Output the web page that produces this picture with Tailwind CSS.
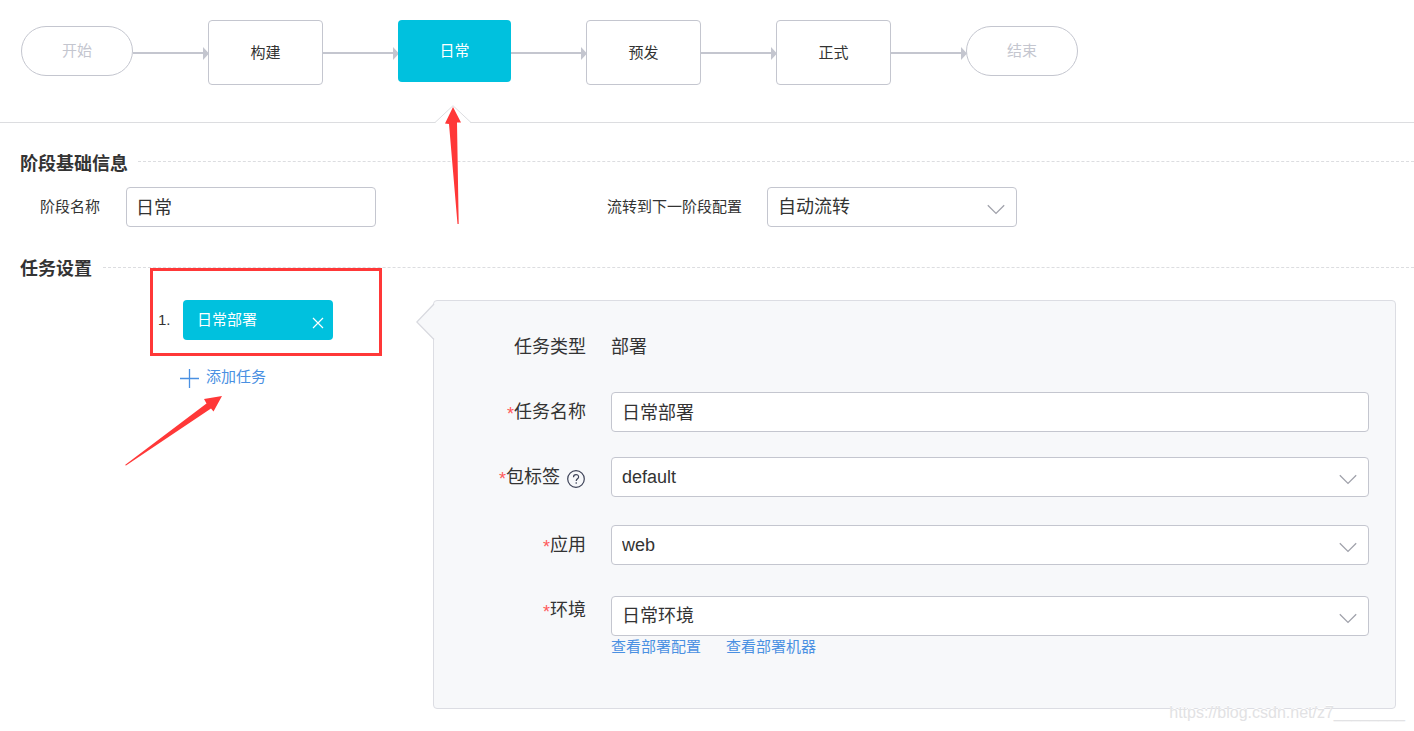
<!DOCTYPE html>
<html lang="zh-CN">
<head>
<meta charset="utf-8">
<meta name="viewport" content="width=device-width, initial-scale=1">
<title>流水线配置</title>
<script src="https://cdn.jsdelivr.net/npm/@tailwindcss/browser@4"></script>
</head>
<body class="relative min-h-screen bg-white font-['Liberation_Sans','Noto_Sans_CJK_SC',sans-serif] text-[15px] text-[#333]">

<!-- Pipeline stages -->
<header class="flex items-start border-b border-[#dcdde0] pt-5 pb-[37px] pl-[21px]">
  <button class="mt-[6px] h-[50px] w-28 shrink-0 rounded-full border border-[#c4c6cf] pt-px text-[#c4c6cf]">开始</button>
  <svg class="relative mt-[27px] h-[13px] w-[76px] -mr-px shrink-0" viewBox="0 0 76 13"><path d="M0 5h71v2H0zM70 0l6 6.5-6 6.5z" fill="#c4c6cf"/></svg>
  <button class="h-[65px] w-[115px] shrink-0 rounded border border-[#c4c6cf] pt-px">构建</button>
  <svg class="relative mt-[27px] h-[13px] w-[76px] -mr-px shrink-0" viewBox="0 0 76 13"><path d="M0 5h71v2H0zM70 0l6 6.5-6 6.5z" fill="#c4c6cf"/></svg>
  <div class="relative shrink-0">
    <button class="block h-[62px] w-[113px] rounded bg-[#00c1de] pt-px text-white">日常</button>
    <svg class="absolute top-[85px] left-[37px] h-[19px] w-9" viewBox="0 0 36 19"><path d="M0 17.5h0.500L18 .7 35.500 17.500V19H0z" fill="#fff"/><path d="M0 17.500L18 .7 36 17.500" fill="none" stroke="#dcdde0"/></svg>
    <svg class="absolute top-[87px] left-[46px] z-10 h-[118px] w-[18px]" viewBox="0 0 18 118"><path d="M9 0L17 15.500H13L14.700 117H13.500L5 17 1 16.500z" fill="#ff3838"/></svg>
  </div>
  <svg class="relative mt-[27px] h-[13px] w-[76px] -mr-px shrink-0" viewBox="0 0 76 13"><path d="M0 5h71v2H0zM70 0l6 6.5-6 6.5z" fill="#c4c6cf"/></svg>
  <button class="h-[65px] w-[115px] shrink-0 rounded border border-[#c4c6cf] pt-px">预发</button>
  <svg class="relative mt-[27px] h-[13px] w-[76px] -mr-px shrink-0" viewBox="0 0 76 13"><path d="M0 5h71v2H0zM70 0l6 6.5-6 6.5z" fill="#c4c6cf"/></svg>
  <button class="h-[65px] w-[115px] shrink-0 rounded border border-[#c4c6cf] pt-px">正式</button>
  <svg class="relative mt-[27px] h-[13px] w-[76px] -mr-px shrink-0" viewBox="0 0 76 13"><path d="M0 5h71v2H0zM70 0l6 6.5-6 6.5z" fill="#c4c6cf"/></svg>
  <button class="mt-[6px] h-[50px] w-28 shrink-0 rounded-full border border-[#c4c6cf] pt-px text-[#c4c6cf]">结束</button>
</header>

<main>
  <!-- Stage basics -->
  <section class="pt-[27px]">
    <div class="flex items-start gap-[10px] pl-5">
      <h2 class="text-[18px] leading-7 font-bold">阶段基础信息</h2>
      <div class="mt-[11px] grow border-t border-dashed border-[#dcdde0]"></div>
    </div>
    <div class="mt-[9px] flex">
      <div class="flex w-[607px] items-center pl-10">
        <label for="stage" class="w-[86px] pt-px">阶段名称</label>
        <input id="stage" value="日常" class="h-10 w-[250px] rounded border border-[#c4c6cf] bg-white px-[9px] pb-[2px] text-[18px]">
      </div>
      <div class="flex items-center">
        <label for="flow" class="w-40 pt-px">流转到下一阶段配置</label>
        <div class="relative">
          <select id="flow" class="block h-10 w-[250px] appearance-none rounded border border-[#c4c6cf] bg-white px-[10px] text-[18px]"><option>自动流转</option></select>
          <svg class="pointer-events-none absolute top-[17px] right-[12px] h-[11px] w-[18px]" viewBox="0 0 18 11" fill="none" stroke="#a0a2ab" stroke-width="1.300"><path d="M.8 1.200L9 9.400l8.200-8.200"/></svg>
        </div>
      </div>
    </div>
  </section>

  <!-- Tasks -->
  <section class="pt-7">
    <div class="flex items-start gap-[11px] pl-5">
      <h2 class="text-[18px] leading-7 font-bold">任务设置</h2>
      <div class="mt-3 grow border-t border-dashed border-[#dcdde0]"></div>
    </div>

    <div class="mt-[17px] flex items-start pr-[18px]">
      <div class="relative w-[433px] shrink-0">
        <div class="flex items-center pl-[158px]">
          <span class="w-[25px]">1.</span>
          <div class="flex h-10 w-[150px] items-center justify-between rounded bg-[#00c1de] pr-[9px] pl-[14px] text-white">
            <button class="pt-px">日常部署</button>
            <button aria-label="删除任务" class="pt-[6px]"><svg class="size-3" viewBox="0 0 12 12" stroke="#fff" stroke-width="1.200"><path d="M1 1l10 10M11 1L1 11"/></svg></button>
          </div>
        </div>
        <button class="mt-[26px] ml-[180px] flex items-center gap-[7px] text-[#4a90e2]">
          <svg class="mt-[2px] size-[19px]" viewBox="0 0 19 19" fill="none" stroke="#4a90e2" stroke-width="1.300"><path d="M0 9.500h19M9.500 0v19"/></svg>添加任务
        </button>
        <!-- Callout marks -->
        <div class="pointer-events-none absolute -top-8 left-[150px] h-[88px] w-[232px] border-3 border-[#ff3838]"></div>
        <svg class="pointer-events-none absolute top-24 left-[125px] h-[70px] w-[98px]" viewBox="0 0 98 70"><path d="M97 0L88.500 15.500 86 12.500 1 69.500 0 69 81.500 7.500 79 3z" fill="#ff3838"/></svg>
      </div>

      <form class="relative grow rounded border border-[#dcdde3] bg-[#f7f8fa] pt-[26px] pr-[26px] pb-[50px] text-[18px]">
        <svg class="absolute top-[2px] -left-[18px] h-[37px] w-[19px]" viewBox="0 0 19 37"><path d="M19 0L.8 18.500 19 37z" fill="#f7f8fa"/><path d="M18 1L.8 19 18 36.500" fill="none" stroke="#d8d9df" stroke-width="1.300"/></svg>
        <div class="flex gap-[25px]">
          <span class="flex h-10 w-[152px] shrink-0 items-center justify-end">任务类型</span>
          <span class="flex h-10 items-center">部署</span>
        </div>
        <div class="mt-[25px] flex gap-[25px]">
          <label for="name" class="flex h-10 w-[152px] shrink-0 items-center justify-end"><span class="pt-1 text-[#ff5a5a]">*</span>任务名称</label>
          <input id="name" value="日常部署" class="h-10 min-w-0 grow rounded border border-[#c4c6cf] bg-white px-[10px] pb-[2px]">
        </div>
        <div class="mt-[25px] flex gap-[25px]">
          <div class="flex h-10 w-[152px] shrink-0 items-center justify-end">
            <label for="tag" class="flex items-center pt-px"><span class="pt-1 text-[#ff5a5a]">*</span>包标签</label>
            <button type="button" aria-label="帮助" class="mt-1 mr-px ml-[7px]"><svg class="size-[18px]" viewBox="0 0 18 18" fill="none" stroke="#3d4257" stroke-width="1.200"><circle cx="9" cy="9" r="8.300"/><path d="M6.500 7.200C6.500 3.700 11.600 3.800 11.600 6.900 11.600 8.700 9.200 8.900 9.200 11M9.200 12.300v1.400"/></svg></button>
          </div>
          <div class="relative grow">
            <select id="tag" class="block h-10 w-full appearance-none rounded border border-[#c4c6cf] bg-white px-[10px]"><option>default</option></select>
            <svg class="pointer-events-none absolute top-[17px] right-[12px] h-[11px] w-[18px]" viewBox="0 0 18 11" fill="none" stroke="#a0a2ab" stroke-width="1.300"><path d="M.8 1.200L9 9.400l8.200-8.200"/></svg>
          </div>
        </div>
        <div class="mt-[28px] flex gap-[25px]">
          <label for="app" class="flex h-10 w-[152px] shrink-0 items-center justify-end"><span class="pt-1 text-[#ff5a5a]">*</span>应用</label>
          <div class="relative grow">
            <select id="app" class="block h-10 w-full appearance-none rounded border border-[#c4c6cf] bg-white px-[10px]"><option>web</option></select>
            <svg class="pointer-events-none absolute top-[17px] right-[12px] h-[11px] w-[18px]" viewBox="0 0 18 11" fill="none" stroke="#a0a2ab" stroke-width="1.300"><path d="M.8 1.200L9 9.400l8.200-8.200"/></svg>
          </div>
        </div>
        <div class="mt-[31px] flex gap-[25px]">
          <label for="env" class="flex h-7 w-[152px] shrink-0 items-center justify-end"><span class="pt-1 text-[#ff5a5a]">*</span>环境</label>
          <div class="grow">
            <div class="relative">
              <select id="env" class="block h-10 w-full appearance-none rounded border border-[#c4c6cf] bg-white px-[10px]"><option>日常环境</option></select>
              <svg class="pointer-events-none absolute top-[17px] right-[12px] h-[11px] w-[18px]" viewBox="0 0 18 11" fill="none" stroke="#a0a2ab" stroke-width="1.300"><path d="M.8 1.200L9 9.400l8.200-8.200"/></svg>
            </div>
            <div class="flex gap-[25px] text-[15px] leading-[22px] text-[#4a90e2]">
              <a href="#config">查看部署配置</a>
              <a href="#machines">查看部署机器</a>
            </div>
          </div>
        </div>
      </form>
    </div>
  </section>
</main>

<div class="pointer-events-none absolute right-[9px] bottom-[6px] text-[16px] leading-6 text-[#e2e2e4] [text-shadow:0_-1px_0_#fff]">https://blog.csdn.net/z7________</div>
</body>
</html>
